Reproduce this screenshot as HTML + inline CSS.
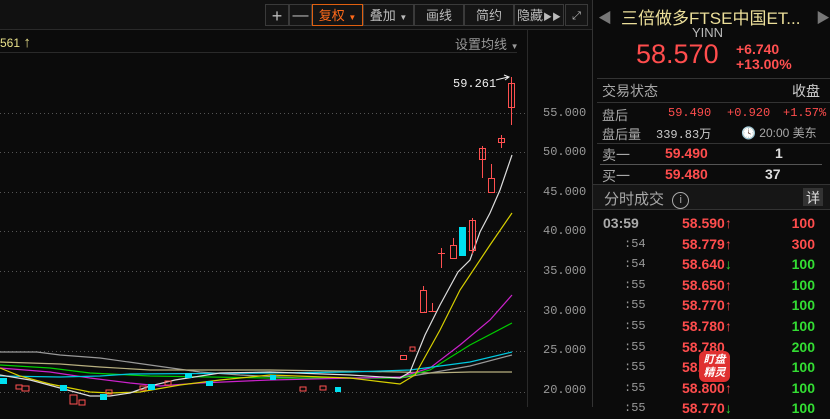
<!DOCTYPE html>
<html><head><meta charset="utf-8"><style>
body{margin:0;width:830px;height:407px;background:#0b0b0b;overflow:hidden;font-family:"Liberation Sans","Noto Sans CJK SC",sans-serif;position:relative}
.a{position:absolute;white-space:nowrap}
.btn{position:absolute;top:4px;height:22px;background:#151515;border:1px solid #3a3a3a;color:#bbb;font-size:13px;line-height:22px;text-align:center;box-sizing:border-box}
.r{color:#ff4d4d}.g{color:#33dd33}.gr{color:#a8a8a8}
.mono{font-family:"Liberation Mono",monospace}
</style></head><body>
<div class="a" style="left:0;top:0;width:593px;height:29px;background:#111;border-bottom:1px solid #2a2a2a"></div>
<div class="btn" style="left:265px;width:24px;font-size:18px">+</div>
<div class="btn" style="left:289px;width:23px;font-size:16px">—</div>
<div class="btn" style="left:312px;width:51px;border-color:#e06010;color:#ff6a1a">复权 <span style="font-size:8px">▼</span></div>
<div class="btn" style="left:363px;width:51px">叠加 <span style="font-size:8px">▼</span></div>
<div class="btn" style="left:414px;width:50px">画线</div>
<div class="btn" style="left:464px;width:50px">简约</div>
<div class="btn" style="left:514px;width:50px">隐藏<span style="font-size:9px">▶▶</span></div>
<div class="btn" style="left:565px;width:23px;font-size:11px">⤢</div>
<div class="a" style="left:0;top:34px;font-size:12px;color:#e8e08a">561 <span style="font-size:15px">↑</span></div>
<div class="a" style="left:455px;top:34px;font-size:13px;color:#999">设置均线 <span style="font-size:8px">▼</span></div>
<div class="a" style="left:0;top:52px;width:517px;height:1px;background:#2a2a2a"></div>
<div class="a" style="left:527px;top:30px;width:1px;height:377px;background:#2a2a2a"></div>
<div class="a" style="left:592px;top:0;width:1px;height:407px;background:#333"></div>
<div class="a mono" style="left:543px;top:106px;font-size:12px;color:#999">55.000</div>
<div class="a mono" style="left:543px;top:145px;font-size:12px;color:#999">50.000</div>
<div class="a mono" style="left:543px;top:185px;font-size:12px;color:#999">45.000</div>
<div class="a mono" style="left:543px;top:224px;font-size:12px;color:#999">40.000</div>
<div class="a mono" style="left:543px;top:264px;font-size:12px;color:#999">35.000</div>
<div class="a mono" style="left:543px;top:304px;font-size:12px;color:#999">30.000</div>
<div class="a mono" style="left:543px;top:343px;font-size:12px;color:#999">25.000</div>
<div class="a mono" style="left:543px;top:383px;font-size:12px;color:#999">20.000</div>
<div class="a mono" style="left:453px;top:77px;font-size:12px;color:#eee">59.261</div>
<svg class="a" style="left:0;top:0" width="530" height="407">
<g stroke="#555" stroke-dasharray="1,3">
<line x1="0" y1="113.5" x2="527" y2="113.5"/><line x1="0" y1="152.5" x2="527" y2="152.5"/><line x1="0" y1="192.5" x2="527" y2="192.5"/><line x1="0" y1="231.5" x2="527" y2="231.5"/><line x1="0" y1="271.5" x2="527" y2="271.5"/><line x1="0" y1="311.5" x2="527" y2="311.5"/><line x1="0" y1="351.5" x2="527" y2="351.5"/><line x1="0" y1="392.5" x2="527" y2="392.5"/>
</g>
<path d="M496 80 L508 77 M504 75 L509 77 L505 80" stroke="#eee" fill="none"/>
<g fill="none" stroke-width="1.2">
<polyline stroke="#999" points="0,352 37,352 60,355 100,358 150,365 200,372 240,375 300,378 360,378 400,378 430,373 470,366 512,355"/>
<polyline stroke="#b8b080" points="0,362 60,364 100,367 150,370 270,370 400,372 430,373 470,372 512,372"/>
<polyline stroke="#00cc00" points="0,365 50,368 90,373 150,376 270,378 400,378 430,370 470,345 512,323"/>
<polyline stroke="#cc22cc" points="0,368 50,372 90,378 130,383 160,386 200,383 270,380 400,377 430,368 460,345 490,320 512,295"/>
<polyline stroke="#00c8e0" points="0,376 60,377 100,376 130,374 270,373 350,372 410,370 470,362 512,352"/>
<polyline stroke="#d8d000" points="0,368 20,376 50,384 90,392 110,393 140,392 180,385 220,380 270,375 350,378 400,384 415,375 440,330 460,290 490,245 512,213"/>
<polyline stroke="#ddd" points="0,375 30,380 60,388 90,396 110,396 130,393 150,386 175,380 220,373 270,372 350,375 400,378 410,372 425,335 440,305 458,272 470,260 480,232 490,213 500,190 512,155"/>
</g>
<g stroke="#ff5050" fill="none">
<rect x="420.5" y="290.5" width="6" height="22"/><line x1="423.5" y1="286" x2="423.5" y2="290"/>
<line x1="429" y1="311.5" x2="436" y2="311.5"/><line x1="432.5" y1="303" x2="432.5" y2="312"/>
<line x1="438" y1="253.5" x2="445" y2="253.5"/><line x1="441.5" y1="248" x2="441.5" y2="268"/>
<rect x="450.5" y="245.5" width="6" height="13"/><line x1="453.5" y1="238" x2="453.5" y2="245"/>
<rect x="469.5" y="220.5" width="6" height="30"/><line x1="472.5" y1="218" x2="472.5" y2="254"/>
<rect x="479.5" y="148.5" width="6" height="11"/><line x1="482.5" y1="146" x2="482.5" y2="178"/>
<rect x="488.5" y="178.5" width="6" height="14"/><line x1="491.5" y1="164" x2="491.5" y2="178"/>
<rect x="498.5" y="138.5" width="6" height="4"/><line x1="501.5" y1="135" x2="501.5" y2="148"/>
<rect x="508.5" y="83.5" width="6" height="24"/><line x1="511.5" y1="77" x2="511.5" y2="125"/>
<rect x="400.5" y="355.5" width="6" height="4"/><rect x="16" y="385" width="6" height="4"/><rect x="22" y="386" width="7" height="5"/>
<rect x="70" y="395" width="7" height="9"/><rect x="79" y="400" width="6" height="5"/><rect x="106" y="390" width="6" height="4"/>
<rect x="140" y="386" width="6" height="4"/><rect x="165" y="381" width="6" height="4"/><rect x="410" y="347" width="5" height="4"/>
<rect x="300" y="387" width="6" height="4"/><rect x="320" y="386" width="6" height="4"/>
</g>
<g fill="#00e0f0">
<rect x="459" y="227" width="7" height="29"/><rect x="0" y="378" width="7" height="6"/><rect x="60" y="385" width="7" height="6"/>
<rect x="100" y="394" width="7" height="6"/><rect x="148" y="384" width="7" height="6"/><rect x="185" y="373" width="7" height="5"/>
<rect x="206" y="381" width="7" height="5"/><rect x="270" y="375" width="6" height="5"/><rect x="335" y="387" width="6" height="5"/>
</g>
</svg>
<div class="a" style="left:598px;top:8px;color:#777;font-size:14px">◀</div>
<div class="a" style="left:816px;top:8px;color:#777;font-size:14px">▶</div>
<div class="a" style="left:621px;top:4px;font-size:17px;color:#ecdf9a">三倍做多FTSE中国ET...</div>
<div class="a" style="left:692px;top:25px;font-size:13px;color:#bbb">YINN</div>
<div class="a r" style="left:636px;top:39px;font-size:27px">58.570</div>
<div class="a" style="left:736px;top:41px;font-size:14px;font-weight:bold;color:#ff5050">+6.740</div>
<div class="a" style="left:736px;top:56px;font-size:14px;font-weight:bold;color:#ff5050">+13.00%</div>
<div class="a" style="left:597px;top:78px;width:233px;height:1px;background:#333"></div>
<div class="a gr" style="left:602px;top:81px;font-size:14px">交易状态</div>
<div class="a" style="left:792px;top:81px;font-size:14px;color:#ccc">收盘</div>
<div class="a" style="left:597px;top:102px;width:233px;height:1px;background:#333"></div>
<div class="a gr" style="left:602px;top:105px;font-size:13px">盘后</div>
<div class="a mono r" style="left:668px;top:106px;font-size:12px">59.490</div>
<div class="a mono r" style="left:727px;top:106px;font-size:12px">+0.920</div>
<div class="a mono r" style="left:783px;top:106px;font-size:12px">+1.57%</div>
<div class="a gr" style="left:602px;top:124px;font-size:13px">盘后量</div>
<div class="a mono" style="left:656px;top:125px;font-size:12px;color:#ccc">339.83万</div>
<div class="a gr" style="left:741px;top:124px;font-size:12px">🕓 20:00 美东</div>
<div class="a" style="left:597px;top:143px;width:233px;height:1px;background:#333"></div>
<div class="a gr" style="left:602px;top:145px;font-size:14px">卖一</div>
<div class="a r" style="left:665px;top:145px;font-size:14px;font-weight:bold">59.490</div>
<div class="a" style="left:775px;top:145px;font-size:14px;font-weight:bold;color:#ddd">1</div>
<div class="a" style="left:600px;top:164px;width:222px;height:1px;background:#555"></div>
<div class="a gr" style="left:602px;top:166px;font-size:14px">买一</div>
<div class="a r" style="left:665px;top:166px;font-size:14px;font-weight:bold">59.480</div>
<div class="a" style="left:765px;top:166px;font-size:14px;font-weight:bold;color:#ddd">37</div>
<div class="a" style="left:593px;top:184px;width:237px;height:24px;background:#161616;border-top:1px solid #333;border-bottom:1px solid #333"></div>
<div class="a gr" style="left:604px;top:188px;font-size:15px">分时成交 <span style="display:inline-block;width:15px;height:15px;border:1.5px solid #aaa;border-radius:50%;font-size:11px;text-align:center;line-height:15px;vertical-align:1px;margin-left:4px">i</span></div>
<div class="a" style="left:803px;top:188px;width:20px;height:18px;background:#333;color:#ddd;font-size:14px;text-align:center">详</div>
<div class="a" style="left:603px;top:213px;font-size:14px;font-weight:bold;color:#aaa;line-height:20.6px">03:59</div>
<div class="a mono" style="left:624px;top:233.6px;font-size:12px;color:#999;line-height:20.6px">:54<br>:54<br>:55<br>:55<br>:55<br>:55<br>:55<br>:55<br>:55</div>
<div class="a r" style="left:682px;top:213px;font-size:14px;font-weight:bold;line-height:20.6px">58.590↑<br>58.779↑<br>58.640<span class="g">↓</span><br>58.650↑<br>58.770↑<br>58.780↑<br>58.780<br>58.810↑<br>58.800↑<br>58.770<span class="g">↓</span></div>
<div class="a" style="left:790px;top:213px;font-size:14px;font-weight:bold;line-height:20.6px;text-align:right;width:25px"><span class="r">100<br>300</span><br><span class="g">100<br>100<br>100<br>100<br>200<br>100<br>100<br>100</span></div>
<div class="a" style="left:699px;top:351px;width:31px;height:31px;background:#e03030;border-radius:6px;color:#fff;font-size:11px;font-weight:bold;line-height:13px;text-align:center;padding-top:3px;box-sizing:border-box;font-style:italic">盯盘<br>精灵</div>
</body></html>
